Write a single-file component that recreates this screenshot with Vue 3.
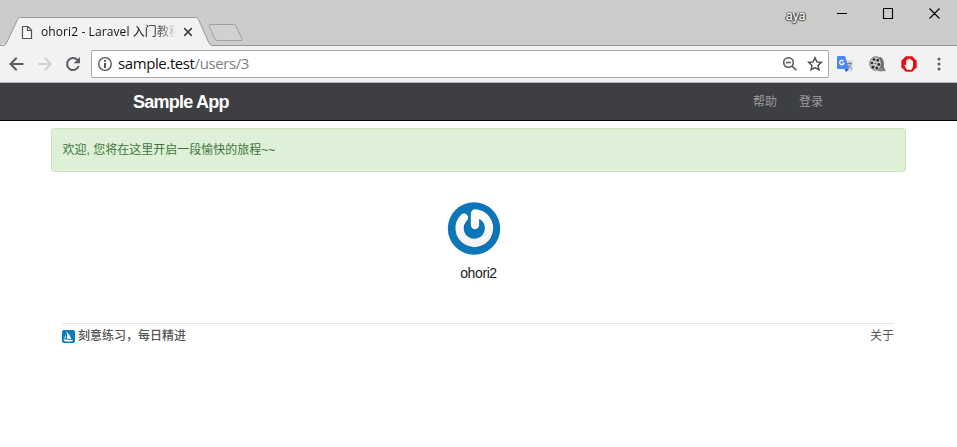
<script setup>
const navLinks = ['帮助', '登录']
</script>

<template>
  <div class="window">
    <header class="titlebar">
      <div class="tab">
        <svg class="tab-shape" width="212" height="30" viewBox="0 0 212 30">
          <path d="M1 28.5H4Q6 28.5 7 26L17.500 3.500Q18.500 1.500 20 1.500H196Q197.500 1.500 198.500 3.500L208.500 26Q209.500 28.500 212 28.500V30H0Z" fill="#f2f2f2" />
          <path d="M0 29.500H4Q6 29 7 26L17.500 3.500Q18.500 1.500 20 1.500H196Q197.500 1.500 198.500 3.500L208.500 26Q209.500 29 212 29.500" fill="none" stroke="#979797" />
        </svg>
        <svg class="page-icon" width="12" height="15" viewBox="0 0 12 15">
          <path d="M1.500 1.500H7L10.500 5V13.500H1.500ZM6.500 1.500V5.500H10.500" fill="#f8f8f8" stroke="#555" stroke-width="1.200" />
        </svg>
        <span class="tab-title">ohori2 - Laravel 入门教程</span>
        <svg class="tab-close" width="10" height="10" viewBox="0 0 10 10">
          <path d="M1.200 1.200L8.800 8.800M8.800 1.200L1.200 8.800" stroke="#444" stroke-width="1.700" />
        </svg>
      </div>
      <svg class="new-tab" width="37" height="20" viewBox="0 0 37 20">
        <path d="M3 1.500H26Q27.500 1.500 28 3L34 16Q34.500 17.500 33 17.500H10Q8 17.500 7 16L1 3Q.5 1.500 3 1.500Z" fill="#d1d1d1" stroke="#a0a0a0" />
      </svg>
      <span class="profile">aya</span>
      <svg class="controls" width="104" height="12" viewBox="0 0 104 12">
        <path d="M0 5.500H10M46.500 .5H55.500V10.500H46.500ZM92.500 .5L102.500 10.500M102.500 .5L92.500 10.500" fill="none" stroke="#000" stroke-width="1.100" />
      </svg>
    </header>

    <div class="toolbar">
      <svg class="nav-icons" width="74" height="18" viewBox="0 0 74 18">
        <path d="M16.500 9H3.500M9.700 2.800L3.500 9L9.700 15.200" fill="none" stroke="#5a5d63" stroke-width="2" />
        <path d="M31 9H44M37.800 2.800L44 9L37.800 15.200" fill="none" stroke="#d2d2d2" stroke-width="2" />
        <path d="M70.500 5A6 6 0 1 0 71.700 11" fill="none" stroke="#5a5d63" stroke-width="2" />
        <path d="M73 2V8.300H66.700Z" fill="#5a5d63" />
      </svg>
      <div class="omnibox">
        <svg width="16" height="16" viewBox="0 0 16 16">
          <circle cx="8" cy="8" r="6.300" fill="none" stroke="#505050" stroke-width="1.300" />
          <path d="M8 7V12M8 4V5.700" stroke="#444" stroke-width="1.800" />
        </svg>
        <span class="url">sample.test<span class="path">/users/3</span></span>
        <svg class="zoom-icon" width="16" height="16" viewBox="0 0 16 16">
          <circle cx="6.500" cy="6.500" r="4.800" fill="none" stroke="#555" stroke-width="1.500" />
          <path d="M4 6.500H9M10 10L14.300 14.300" stroke="#555" stroke-width="1.600" />
        </svg>
        <svg class="star" width="16" height="16" viewBox="0 0 16 16">
          <path d="M8 1.800L9.900 5.900L14.300 6.400L11 9.400L11.900 13.800L8 11.600L4.100 13.800L5 9.400L1.700 6.400L6.100 5.900Z" fill="none" stroke="#505050" stroke-width="1.500" />
        </svg>
      </div>
      <svg class="ext translate" width="17" height="17" viewBox="0 0 17 17">
        <path d="M6 4H15.500Q16 4 16 4.500V15.500H9Z" fill="#dcdcdc" />
        <path d="M10 7.500H15M12.500 6V8M14 8Q13 11 10 12.500M11 8.500Q12 11.500 15 12.500" fill="none" stroke="#6c8492" />
        <path d="M1 0H8L12 13H1Q0 13 0 12V1Q0 0 1 0Z" fill="#4a8af4" />
        <path d="M7.500 13H12L9 16Z" fill="#3a50c4" />
        <path d="M6.400 5A2.200 2.200 0 1 0 7 7H5" fill="none" stroke="#fff" stroke-width="1.200" />
      </svg>
      <svg class="ext reel" width="17" height="17" viewBox="0 0 17 17">
        <path d="M6 1Q14 0 15 6V12L17 15L11 15.500L7 14Z" fill="#888" />
        <path d="M11 2Q14 5 13 11L15.500 14" fill="none" stroke="#555" stroke-width="1.800" stroke-dasharray="1.300 1" />
        <ellipse cx="6.500" cy="7.500" rx="5.800" ry="6.800" fill="#ccc" stroke="#666" stroke-width=".8" />
        <g fill="#2b2b2b">
          <ellipse cx="5" cy="3.500" rx="1.500" ry="1.300" /><ellipse cx="8.700" cy="4.300" rx="1.300" ry="1.500" />
          <circle cx="2.900" cy="7" r="1.300" /><circle cx="9.700" cy="8.500" r="1.400" />
          <circle cx="4" cy="10.900" r="1.500" /><circle cx="7.700" cy="12" r="1.400" /><circle cx="6.300" cy="7.500" r=".7" />
        </g>
      </svg>
      <svg class="ext block" width="16" height="16" viewBox="0 0 16 16">
        <path d="M4.800 .3H11.200L15.700 4.800V11.200L11.200 15.700H4.800L.3 11.200V4.800Z" fill="#e31212" />
        <path d="M6 13.800Q4.300 11.500 3.400 9.100Q4.200 8.100 5.200 9.400V4.500Q5.800 3.600 6.400 4.500V3Q7 2.100 7.700 3Q8.500 1.800 9.300 3.200Q10.400 2.900 10.700 4.400Q12 4.300 12 5.700V10Q11.700 12.300 10.400 13.800Z" fill="#fff" />
        <path d="M6.500 4.500V7.500M8 3.500V7.500M9.500 4.500V7.500" stroke="#f3a4a4" stroke-width=".4" />
      </svg>
      <svg class="menu" width="4" height="14" viewBox="0 0 4 14">
        <g fill="#5a5d63"><circle cx="2" cy="2" r="1.500" /><circle cx="2" cy="7" r="1.500" /><circle cx="2" cy="12" r="1.500" /></g>
      </svg>
    </div>

    <nav class="navbar">
      <span class="brand">Sample App</span>
      <span v-for="link in navLinks" :key="link" class="link">{{ link }}</span>
    </nav>

    <main class="container">
      <div class="alert">欢迎, 您将在这里开启一段愉快的旅程~~</div>
      <section class="user">
        <svg class="avatar" width="54" height="54" viewBox="0 0 54 54">
          <defs>
            <linearGradient id="power" x1="0" y1="0" x2="0" y2="1">
              <stop offset="0" stop-color="#fff" /><stop offset="1" stop-color="#f3f3f3" />
            </linearGradient>
          </defs>
          <circle cx="27" cy="27.500" r="26.200" fill="#0d76b9" />
          <g fill="none" stroke-linecap="round" stroke-linejoin="round">
            <path d="M17 16.700A14.700 14.700 0 1 0 28 12.500V24" transform="translate(.5 .8)" stroke="#075583" stroke-width="8.600" opacity=".4" />
            <path d="M17 16.700A14.700 14.700 0 1 0 28 12.500V24" stroke="url(#power)" stroke-width="8.300" />
          </g>
        </svg>
        <h1 class="name">ohori2</h1>
      </section>
      <footer class="footer">
        <svg width="13" height="13" viewBox="0 0 13 13">
          <rect width="13" height="13" rx="2" fill="#0c7db5" />
          <path d="M4.200 1.200Q8 4.500 9.500 9.200L5 8.600Q6 5 4.200 1.200ZM3.700 4Q4.200 6 3.500 8.500L2.200 8.300Q3.600 6 3.700 4ZM1.200 9.300L11.500 10.300L9.500 11.400H3Z" fill="#fff" />
        </svg>
        <span class="slogan">刻意练习，每日精进</span>
        <span class="about">关于</span>
      </footer>
    </main>
  </div>
</template>

<style>
body { margin: 0; background: #fff; }
</style>

<style scoped>
* { box-sizing: border-box; }
svg { display: block; flex: none; }
.window { width: 957px; height: 447px; overflow: hidden; background: #fff; font-family: "Liberation Sans", "Noto Sans CJK SC", sans-serif; }
.titlebar { height: 46px; display: flex; align-items: flex-start; background: #ccc; border-bottom: 1px solid #979797; }
.tab { position: relative; display: flex; align-items: center; width: 212px; height: 30px; margin-top: 16px; padding: 2px 0 0 21px; }
.tab-shape { position: absolute; left: 0; top: 0; }
.page-icon, .tab-title, .tab-close { position: relative; }
.tab-title { width: 134px; margin-left: 8px; white-space: nowrap; font: 12px/18px "Open Sans", "Noto Sans CJK SC", sans-serif; letter-spacing: .1px; color: #111; mask-image: linear-gradient(to right, #000 112px, transparent 136px); }
.tab-close { margin-left: 8px; }
.new-tab { margin: 23px 0 0 -4px; }
.profile { margin: 8px 0 0 541px; width: 22px; font: 12px/16px "Open Sans", sans-serif; -webkit-text-stroke: .3px #fff; color: #fff; text-shadow: 0 0 2px #222, 0 0 2px #222, 1px 0 1px #444, -1px 0 1px #444, 0 1px 1px #444; }
.controls { margin: 8px 0 0 29px; }
.toolbar { height: 37px; display: flex; align-items: center; padding-left: 7px; background: #f2f2f2; border-bottom: 1px solid #b5b5b5; }
.omnibox { display: flex; align-items: center; width: 738px; height: 28px; margin-left: 10px; padding: 0 5px; border: 1px solid #a8a8a8; border-radius: 2px; background: #fff; }
.url { margin-left: 5px; padding-bottom: 2px; font: 15px/24px "Open Sans", sans-serif; letter-spacing: -.4px; color: #111; }
.path { color: #808080; }
.zoom-icon { margin-left: auto; }
.star { margin-left: 9px; }
.translate { margin-left: 8px; }
.reel { margin-left: 15px; }
.block { margin-left: 15px; }
.menu { margin-left: 20px; }
.navbar { height: 38px; display: flex; align-items: center; padding-left: 133px; background: #3e3f43; border-bottom: 1px solid #080808; color: #9d9d9d; }
.brand { width: 620px; padding-top: 1px; font-size: 18px; font-weight: 700; letter-spacing: -.75px; color: #fff; }
.link { width: 46px; font-size: 12px; line-height: 18px; }
.container { width: 855px; margin: 7px 0 0 51px; }
.alert { height: 44px; padding: 0 10.500px; border: 1px solid #cfe5bd; border-radius: 3px; background: #dff0d8; color: #3c763d; font-size: 12px; line-height: 42px; }
.user { display: flex; flex-direction: column; align-items: center; padding-top: 29px; }
.avatar { margin-right: 9px; }
.name { margin: 9px 0 0; font-size: 14px; line-height: 18px; font-weight: 400; letter-spacing: -.4px; color: #222; }
.footer { display: flex; align-items: center; height: 26px; margin: 41px 12px 0 11px; border-top: 1px solid #e5e5e5; color: #555; font-size: 12px; }
.slogan { margin-left: 3px; font-weight: 500; }
.slogan, .about { padding-bottom: 4px; }
.about { margin-left: auto; }
</style>
